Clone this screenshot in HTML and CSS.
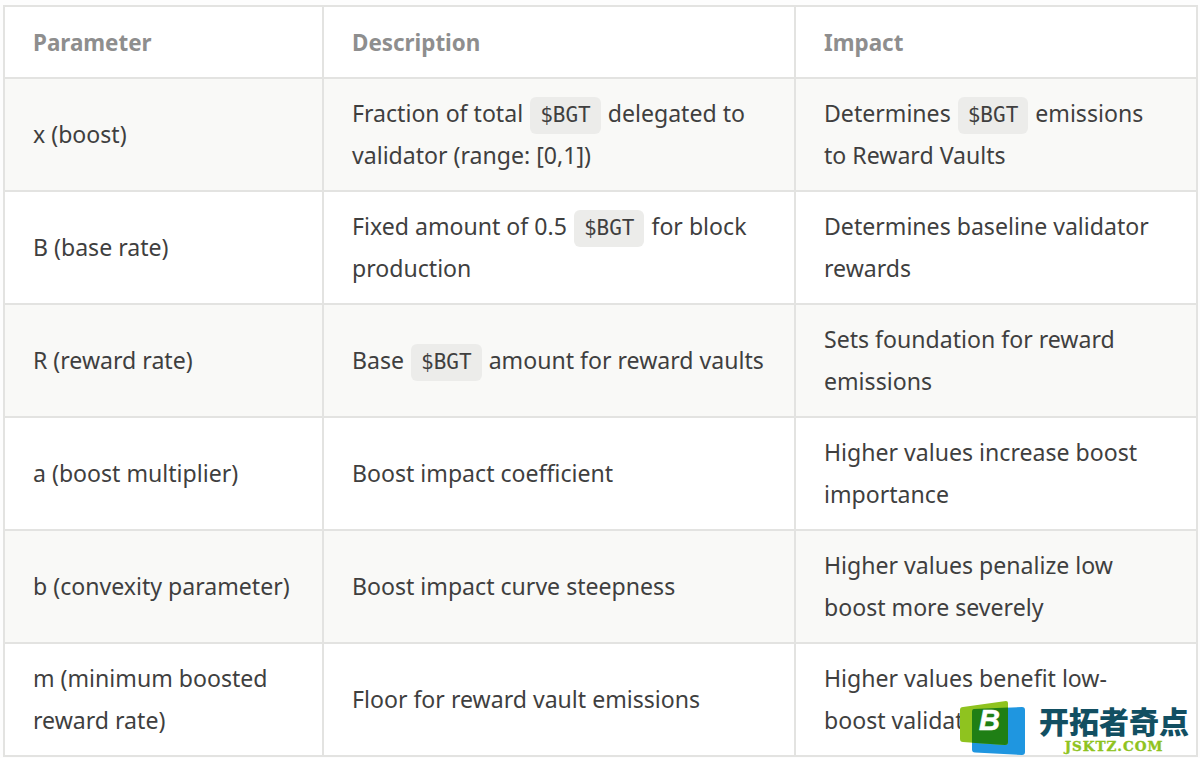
FILE: index.html
```html
<!DOCTYPE html>
<html lang="en">
<head>
<meta charset="utf-8">
<title>Parameters</title>
<link rel="stylesheet" href="styles.css">
</head>
<body>
<table class="params">
<colgroup><col class="c1"><col class="c2"><col class="c3"></colgroup>
<thead><tr><th>Parameter</th><th>Description</th><th>Impact</th></tr></thead>
<tbody>
<tr><td>x (boost)</td><td>Fraction of total <code>$BGT</code> delegated to validator (range: [0,1])</td><td>Determines <code>$BGT</code> emissions to Reward Vaults</td></tr>
<tr><td>B (base rate)</td><td>Fixed amount of 0.5 <code>$BGT</code> for block production</td><td>Determines baseline validator rewards</td></tr>
<tr><td>R (reward rate)</td><td>Base <code>$BGT</code> amount for reward vaults</td><td>Sets foundation for reward emissions</td></tr>
<tr><td>a (boost multiplier)</td><td>Boost impact coefficient</td><td>Higher values increase boost importance</td></tr>
<tr><td>b (convexity parameter)</td><td>Boost impact curve steepness</td><td>Higher values penalize low boost more severely</td></tr>
<tr><td>m (minimum boosted reward rate)</td><td>Floor for reward vault emissions</td><td>Higher values benefit low-boost validators</td></tr>
</tbody>
</table>
<div class="brand">
<svg class="mark" width="66" height="56" viewBox="0 0 66 56" aria-hidden="true">
<path d="M14 9 L62 7 Q65 7 65 10 L65 52 Q65 55 62 55 L15 52.500 Q12 52.500 12 49.500 L12 12 Q12 9 14 9Z" fill="#1f96e0"/>
<path d="M3 7 L46 1 Q48 1 48 3 L48 42 Q48 45 45 45 L3 42 Q0 42 0 39 L0 10 Q0 7 3 7Z" fill="#8fc31f"/>
<path d="M14 9 L48 7.500 L48 42 Q48 45 45 45 L12 42.800 L12 12 Q12 9 14 9Z" fill="#1f7f15"/>
</svg>
<span class="b">B</span>
<div class="words"><div class="cn">开拓者奇点</div><div class="en">JSKTZ.COM</div></div>
</div>
</body>
</html>
```
FILE: styles.css
```css
* { box-sizing: border-box; }
html, body { height: 100%; }
body {
  margin: 0;
  padding: 5px 0 0 3px;
  background: #fdfdfd;
  color: #3f3f3f;
  font-family: "Noto Sans", "Open Sans", sans-serif;
  font-size: 23.1px;
  overflow: hidden;
}
.params {
  width: 1195px;
  table-layout: fixed;
  border-collapse: collapse;
  background: #fff;
}
.c1 { width: 319px; }
.c2 { width: 472px; }
.params th, .params td {
  border: 2px solid #e3e3e1;
  padding: 0 24px 1px 28px;
  text-align: left;
  vertical-align: middle;
  line-height: 42px;
}
.params td:last-child { padding-right: 36px; }
.params th {
  height: 72px;
  padding-top: 2px;
  padding-bottom: 0;
  font-size: 22.4px;
  font-weight: 700;
  color: #8e8e8e;
}
.params td { height: 113px; }
.params tbody tr:nth-child(odd) td { background: #f9f9f7; }
code {
  display: inline-block;
  font-family: "DejaVu Sans Mono", monospace;
  font-size: 21px;
  line-height: 37px;
  padding: 0 10px;
  margin: 0 1px;
  background: #ececea;
  border-radius: 6px;
}
.brand {
  position: absolute;
  left: 960px;
  top: 700px;
  width: 240px;
  height: 58px;
  display: flex;
  gap: 13px;
}
.mark { flex: none; }
.b {
  position: absolute;
  left: 19px;
  top: 2px;
  font: italic 700 29px/36px "Liberation Sans", sans-serif;
  color: #fff;
  -webkit-text-stroke: 0.6px #fff;
}
.cn {
  font-family: "Noto Sans CJK SC", sans-serif;
  font-weight: 900;
  font-size: 30px;
  line-height: 34px;
  color: #124f62;
  margin-top: 3px;
}
.en {
  font-family: "DejaVu Serif", serif;
  font-weight: 700;
  font-size: 13.500px;
  line-height: 16px;
  margin-top: 1px;
  color: #8fc31f;
  text-align: center;
  letter-spacing: 1px;
  -webkit-text-stroke: 0.4px #8fc31f;
}
```
